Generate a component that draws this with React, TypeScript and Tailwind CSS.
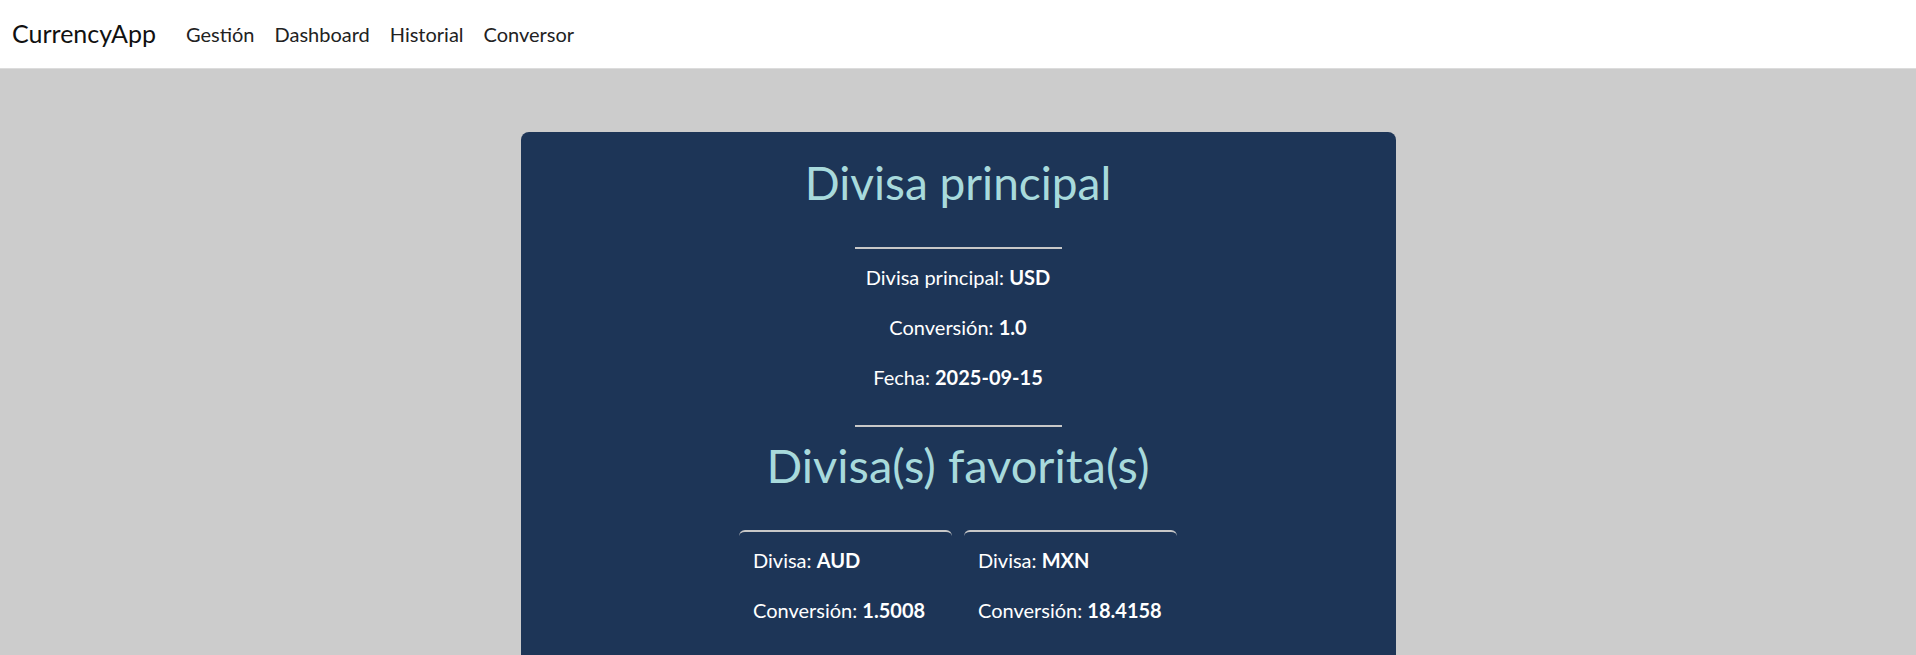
import React from 'react';

const favoritas = [
  { code: 'AUD', rate: '1.5008' },
  { code: 'MXN', rate: '18.4158' },
];

const links = ['Gestión', 'Dashboard', 'Historial', 'Conversor'];

export default function App() {
  return (
    <div className="min-h-screen bg-[#cccccc] font-['Lato','Noto_Sans',sans-serif]">
      {/* Navbar */}
      <nav className="h-[69px] bg-white border-b border-[#dcdcdc] flex items-center pl-3">
        <a className="text-[25px] text-[#111] mr-[30px]">CurrencyApp</a>
        <ul className="flex items-center gap-5">
          {links.map((l) => (
            <li key={l} className="text-[20px] text-[#222]">
              {l}
            </li>
          ))}
        </ul>
      </nav>

      {/* Card */}
      <div className="pt-[63px]">
        <div className="w-[875px] mx-auto bg-[#1d3557] rounded-lg pt-[23px] pb-10 text-center text-white">
          <h1 className="text-[46px] leading-[56px] text-[#a8dadc]">Divisa principal</h1>
          <div className="w-[207px] h-[2px] bg-[#c8c8c8] mx-auto mt-[36px]" />

          <div className="mt-[13px] flex flex-col gap-5 text-[20px] leading-[30px]">
            <p>
              Divisa principal: <span className="font-bold">USD</span>
            </p>
            <p>
              Conversión: <span className="font-bold">1.0</span>
            </p>
            <p>
              Fecha: <span className="font-bold">2025-09-15</span>
            </p>
          </div>

          <div className="w-[207px] h-[2px] bg-[#c8c8c8] mx-auto mt-[33px]" />
          <h2 className="mt-[10px] text-[47px] leading-[56px] text-[#a8dadc]">Divisa(s) favorita(s)</h2>

          {/* Favoritas */}
          <div className="mt-[37px] flex justify-center gap-3">
            {favoritas.map((f) => (
              <div
                key={f.code}
                className="w-[213px] border-t-2 border-[#c8c8c8] rounded-md px-[14px] pt-[13px] pb-5 text-left text-[20px] leading-[30px] flex flex-col gap-5"
              >
                <p>
                  Divisa: <span className="font-bold">{f.code}</span>
                </p>
                <p>
                  Conversión: <span className="font-bold">{f.rate}</span>
                </p>
              </div>
            ))}
          </div>
        </div>
      </div>
    </div>
  );
}
